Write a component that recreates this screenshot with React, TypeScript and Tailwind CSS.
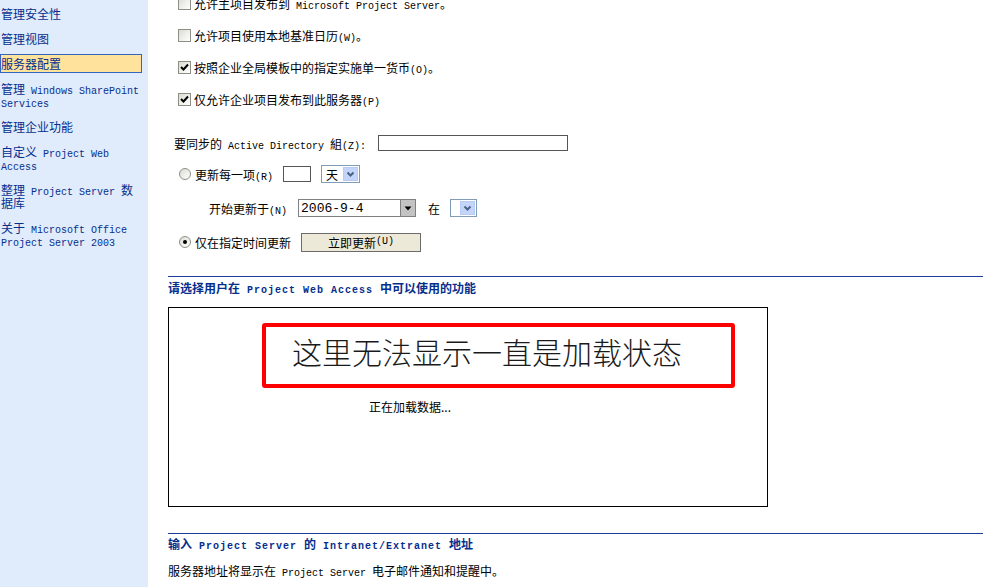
import React from "react";

const MONO = "font-['Liberation_Mono',monospace] text-[10px] leading-[4px]";
const MONO_B = "font-['Liberation_Mono',monospace] text-[10px] leading-[4px] tracking-[1px]";

function Mix({ s, bold }: { s: string; bold?: boolean }) {
  const parts = s.split(/([\x20-\x7e]+)/).filter((p) => p.length > 0);
  return (
    <>
      {parts.map((p, i) =>
        /^[\x20-\x7e]+$/.test(p) ? (
          <span key={i} className={bold ? MONO_B : MONO}>
            {p}
          </span>
        ) : (
          <span key={i}>{p}</span>
        )
      )}
    </>
  );
}

function Checkbox({ checked }: { checked?: boolean }) {
  return (
    <span className="w-[13px] h-[13px] shrink-0 border border-[#8e8e84] bg-gradient-to-br from-[#dcdcd5] to-white flex items-center justify-center">
      {checked && (
        <svg width="9" height="9" viewBox="0 0 9 9">
          <polyline points="1,4 3.5,6.5 8,1.5" fill="none" stroke="#000" strokeWidth="2" />
        </svg>
      )}
    </span>
  );
}

function Radio({ checked }: { checked?: boolean }) {
  return (
    <span className="w-[12px] h-[12px] shrink-0 rounded-full border border-[#8e8e84] bg-gradient-to-br from-[#dcdcd5] to-white flex items-center justify-center">
      {checked && <span className="w-[4px] h-[4px] rounded-full bg-black" />}
    </span>
  );
}

function BlueBtn() {
  return (
    <span className="w-[15px] h-[14px] bg-[#c4d5fb] border border-[#b7cbf5] flex items-center justify-center">
      <svg width="9" height="7" viewBox="0 0 9 7">
        <polyline points="1.5,1.5 4.5,4.5 7.5,1.5" fill="none" stroke="#4d6185" strokeWidth="2" />
      </svg>
    </span>
  );
}

const navItems: { t: string; sel?: boolean }[] = [
  { t: "管理安全性" },
  { t: "管理视图" },
  { t: "服务器配置", sel: true },
  { t: "管理 Windows SharePoint Services" },
  { t: "管理企业功能" },
  { t: "自定义 Project Web Access" },
  { t: "整理 Project Server 数据库" },
  { t: "关于 Microsoft Office Project Server 2003" },
];

export default function App() {
  return (
    <div className="w-[985px] h-[587px] overflow-hidden bg-white flex font-['Noto_Sans_CJK_SC',sans-serif] text-[12px] leading-[13px] text-black">
      <nav className="w-[148px] shrink-0 bg-[#e0ebfb] pt-[1px] text-[#062f8d]">
        {navItems.map((it, i) => (
          <div key={i} className="py-[3px]">
            <div
              className={
                "w-[142px] border py-[2px] " +
                (it.sel ? "bg-[#ffe29b] border-[#3466bf]" : "border-transparent")
              }
            >
              <div className="w-[140px]">
                <Mix s={it.t} />
              </div>
            </div>
          </div>
        ))}
      </nav>

      <main className="flex-1 pl-[20px] pr-[2px] flex flex-col">
        <div className="-mt-[13px] pl-[10px]">
          {[
            { t: "允许主项目发布到 Microsoft Project Server。", c: false },
            { t: "允许项目使用本地基准日历(W)。", c: false },
            { t: "按照企业全局模板中的指定实施单一货币(O)。", c: true },
            { t: "仅允许企业项目发布到此服务器(P)", c: true },
          ].map((r, i) => (
            <div key={i} className="h-[32px] flex items-center">
              <Checkbox checked={r.c} />
              <span className="ml-[3px] whitespace-nowrap">
                <Mix s={r.t} />
              </span>
            </div>
          ))}
        </div>

        <div className="mt-[12px] h-[32px] flex items-center pl-[6px]">
          <span className="whitespace-nowrap">
            <Mix s="要同步的 Active Directory 組(Z):" />
          </span>
          <span className="ml-[12px] w-[190px] h-[16px] border border-[#555555] bg-white" />
        </div>

        <div className="h-[30px] flex items-center pl-[11px]">
          <Radio />
          <span className="ml-[4px] whitespace-nowrap">
            <Mix s="更新每一项(R)" />
          </span>
          <span className="ml-[10px] w-[28px] h-[16px] border border-[#555555] bg-white" />
          <span className="ml-[10px] w-[39px] h-[18px] border border-[#7f9db9] bg-white flex items-center justify-between pl-[4px] pr-[1px]">
            <span>天</span>
            <BlueBtn />
          </span>
        </div>

        <div className="h-[38px] flex items-center pl-[41px]">
          <span className="whitespace-nowrap">
            <Mix s="开始更新于(N)" />
          </span>
          <span className="ml-[11px] w-[102px] h-[18px] border border-[#808080] border-r-0 bg-white flex items-center pl-[2px] font-['Liberation_Mono',monospace] text-[13px]">
            2006-9-4
          </span>
          <span className="w-[16px] h-[18px] bg-[#c3c3c3] border border-[#808080] flex items-center justify-center">
            <svg width="8" height="5" viewBox="0 0 8 5">
              <polygon points="0.5,0.5 7.5,0.5 4,4.5" fill="#000" />
            </svg>
          </span>
          <span className="ml-[12px]">在</span>
          <span className="ml-[10px] w-[27px] h-[18px] border border-[#7f9db9] bg-white flex items-center justify-end pr-[1px]">
            <BlueBtn />
          </span>
        </div>

        <div className="h-[30px] flex items-center pl-[11px]">
          <Radio checked />
          <span className="ml-[4px] whitespace-nowrap">仅在指定时间更新</span>
          <span className="ml-[10px] w-[120px] h-[19px] border border-[#6b6b6b] bg-[#ece9d8] flex items-center justify-center">
            <Mix s="立即更新(U)" />
          </span>
        </div>

        <div className="mt-[19px] h-px bg-[#1b3c98]" />
        <div className="mt-[4px] h-[13px] font-bold text-[#062f8d] whitespace-nowrap">
          <Mix s="请选择用户在 Project Web Access 中可以使用的功能" bold />
        </div>

        <div className="mt-[13px] w-[600px] h-[200px] border border-black pl-[93px] pt-[15px]">
          <div className="w-[473px] h-[65px] border-[4px] border-[#ff0000] rounded-[3px] pl-[26px] pt-[9px]">
            <div className="text-[30px] leading-[30px] font-light text-[#1a1a1a] whitespace-nowrap">
              这里无法显示一直是加载状态
            </div>
          </div>
          <div className="mt-[12px] ml-[107px] whitespace-nowrap">正在加载数据...</div>
        </div>

        <div className="mt-[26px] h-px bg-[#1b3c98]" />
        <div className="mt-[3px] h-[13px] font-bold text-[#062f8d] whitespace-nowrap">
          <Mix s="输入 Project Server 的 Intranet/Extranet 地址" bold />
        </div>
        <div className="mt-[14px] h-[13px] whitespace-nowrap">
          <Mix s="服务器地址将显示在 Project Server 电子邮件通知和提醒中。" />
        </div>
      </main>
    </div>
  );
}
